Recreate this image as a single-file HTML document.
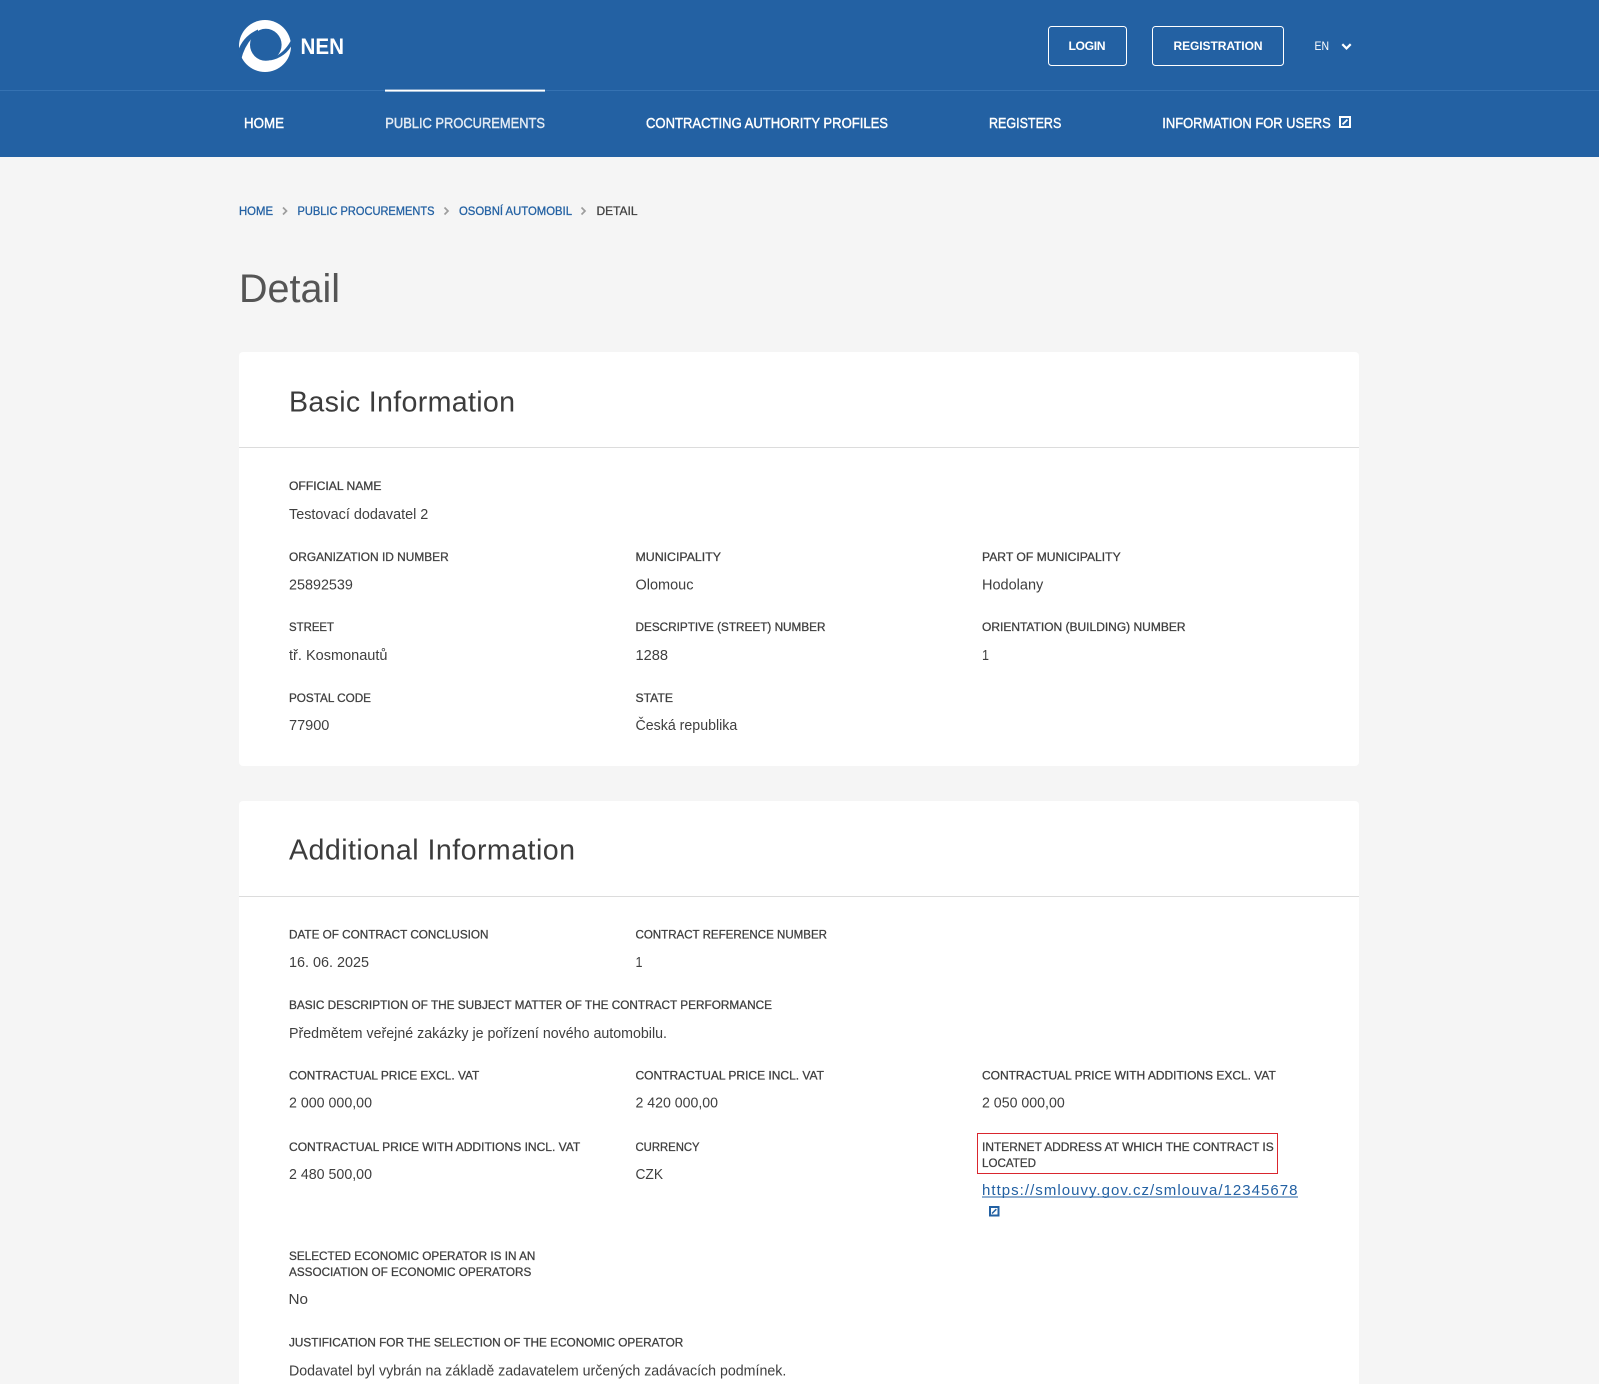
<!DOCTYPE html>
<html lang="en"><head><meta charset="utf-8"><title>Detail</title>
<style>
html,body{margin:0;padding:0;background:#f5f5f5;width:1599px;height:1384px;overflow:hidden}
svg{display:block;position:absolute;left:0;top:0}
text{font-family:"Liberation Sans",sans-serif}
.l{font-size:12.2px;fill:#3f3f3f;stroke:#3f3f3f;stroke-width:.28px}
.v{font-size:14.4px;fill:#3f3f3f}
.n{font-size:14.4px;fill:#fff;stroke:#fff;stroke-width:.4px}
.b{font-size:12.2px;fill:#2361a3;stroke:#2361a3;stroke-width:.3px}
.h{font-size:28.6px;fill:#3c3c3c}
</style></head><body>
<svg width="1599" height="1384" viewBox="0 0 1599 1384" xmlns="http://www.w3.org/2000/svg">
<rect width="1599" height="157" fill="#2361a3"/>
<rect y="90" width="1599" height="1" fill="#3572b2"/>
<rect x="385" y="89.6" width="160" height="2" fill="#fff"/>
<!-- logo -->
<circle cx="265" cy="46" r="26" fill="#fff"/>
<ellipse cx="265.8" cy="44.8" rx="15.8" ry="16" fill="#2361a3"/>
<path d="M258 29.5Q243 36 238 51L241 60Q244 47 252.5 37.5L258 35Z" fill="#2361a3"/>
<path d="M292 38Q287 50 275.5 56.5L270 60.5Q286 57.5 293 43Z" fill="#2361a3"/>
<text x="300.5" y="54" font-size="22" font-weight="700" fill="#fff" textLength="43.5" lengthAdjust="spacingAndGlyphs">NEN</text>
<!-- top buttons -->
<rect x="1048.5" y="26.5" width="78" height="39" rx="3" fill="none" stroke="#fff"/>
<text x="1068.5" y="50" font-size="12.2" font-weight="700" fill="#fff" textLength="37" lengthAdjust="spacing">LOGIN</text>
<rect x="1152.5" y="26.5" width="131" height="39" rx="3" fill="none" stroke="#fff"/>
<text x="1173.5" y="50" font-size="12" font-weight="700" fill="#fff" textLength="89" lengthAdjust="spacing">REGISTRATION</text>
<text x="1314.5" y="50" font-size="12.4" fill="#fff" textLength="14.5" lengthAdjust="spacingAndGlyphs">EN</text>
<path d="M1342.3 44.2L1346.5 48.4L1350.7 44.2" fill="none" stroke="#fff" stroke-width="2.2"/>
<!-- nav -->
<text class="n" x="244" y="127.8" textLength="40" lengthAdjust="spacingAndGlyphs">HOME</text>
<text class="n" x="385.3" y="127.8" textLength="159.7" lengthAdjust="spacingAndGlyphs" style="fill:#e3ebf4;stroke:#e3ebf4">PUBLIC PROCUREMENTS</text>
<text class="n" x="646" y="127.8" textLength="242" lengthAdjust="spacingAndGlyphs">CONTRACTING AUTHORITY PROFILES</text>
<text class="n" x="989" y="127.8" textLength="72.3" lengthAdjust="spacingAndGlyphs">REGISTERS</text>
<text class="n" x="1162.3" y="127.8" textLength="168.4" lengthAdjust="spacingAndGlyphs">INFORMATION FOR USERS</text>
<rect x="1339" y="116" width="12" height="12" fill="#fff"/>
<rect x="1341" y="118" width="8" height="8" fill="#2361a3"/>
<path d="M1342.6 124.4L1347.4 119.6" fill="none" stroke="#fff" stroke-width="1.8"/>
<!-- breadcrumb -->
<text class="b" x="239" y="215" textLength="34" lengthAdjust="spacingAndGlyphs">HOME</text>
<text class="b" x="297.5" y="215" textLength="137" lengthAdjust="spacingAndGlyphs">PUBLIC PROCUREMENTS</text>
<text class="b" x="459" y="215" textLength="113" lengthAdjust="spacingAndGlyphs">OSOBNÍ AUTOMOBIL</text>
<text class="l" x="596.5" y="215" textLength="41" lengthAdjust="spacingAndGlyphs">DETAIL</text>
<g fill="none" stroke="#9d9d9d" stroke-width="1.7">
<path d="M283 207.5L286.5 211L283 214.5"/>
<path d="M444.5 207.5L448 211L444.5 214.5"/>
<path d="M581.5 207.5L585 211L581.5 214.5"/>
</g>
<text x="239" y="302" font-size="40" fill="#555" textLength="101" lengthAdjust="spacingAndGlyphs">Detail</text>
<!-- card 1 -->
<rect x="239" y="352" width="1120" height="414" rx="4" fill="#fff"/>
<rect x="239" y="447" width="1120" height="1" fill="#dcdcdc"/>
<text class="h" x="289" y="411.5" textLength="226" lengthAdjust="spacing">Basic Information</text>
<text class="l" x="289" y="490" textLength="92.5" lengthAdjust="spacingAndGlyphs">OFFICIAL NAME</text>
<text class="v" x="289" y="519" textLength="139.3" lengthAdjust="spacingAndGlyphs">Testovací dodavatel 2</text>
<text class="l" x="289" y="561" textLength="159.7" lengthAdjust="spacingAndGlyphs">ORGANIZATION ID NUMBER</text>
<text class="v" x="289" y="589.5" textLength="63.9" lengthAdjust="spacingAndGlyphs">25892539</text>
<text class="l" x="635.5" y="561" textLength="85.5" lengthAdjust="spacingAndGlyphs">MUNICIPALITY</text>
<text class="v" x="635.5" y="589.5" textLength="58" lengthAdjust="spacingAndGlyphs">Olomouc</text>
<text class="l" x="982" y="561" textLength="138.7" lengthAdjust="spacingAndGlyphs">PART OF MUNICIPALITY</text>
<text class="v" x="982" y="589.5" textLength="61.3" lengthAdjust="spacingAndGlyphs">Hodolany</text>
<text class="l" x="289" y="631" textLength="45" lengthAdjust="spacingAndGlyphs">STREET</text>
<text class="v" x="289" y="660" textLength="98.5" lengthAdjust="spacingAndGlyphs">tř. Kosmonautů</text>
<text class="l" x="635.5" y="631" textLength="190" lengthAdjust="spacingAndGlyphs">DESCRIPTIVE (STREET) NUMBER</text>
<text class="v" x="635.5" y="660" textLength="32.5" lengthAdjust="spacingAndGlyphs">1288</text>
<text class="l" x="982" y="631" textLength="203.5" lengthAdjust="spacingAndGlyphs">ORIENTATION (BUILDING) NUMBER</text>
<text class="v" x="982" y="660" textLength="7" lengthAdjust="spacingAndGlyphs">1</text>
<text class="l" x="289" y="702" textLength="82" lengthAdjust="spacingAndGlyphs">POSTAL CODE</text>
<text class="v" x="289" y="730" textLength="40.4" lengthAdjust="spacingAndGlyphs">77900</text>
<text class="l" x="635.5" y="702" textLength="37.5" lengthAdjust="spacingAndGlyphs">STATE</text>
<text class="v" x="635.5" y="730" textLength="101.8" lengthAdjust="spacingAndGlyphs">Česká republika</text>
<!-- card 2 -->
<path d="M239 1384V805a4 4 0 0 1 4-4H1355a4 4 0 0 1 4 4V1384Z" fill="#fff"/>
<rect x="239" y="896" width="1120" height="1" fill="#dcdcdc"/>
<text class="h" x="289" y="859.5" textLength="286" lengthAdjust="spacing">Additional Information</text>
<text class="l" x="289" y="938.5" textLength="199.5" lengthAdjust="spacingAndGlyphs">DATE OF CONTRACT CONCLUSION</text>
<text class="v" x="289" y="967" textLength="80" lengthAdjust="spacingAndGlyphs">16. 06. 2025</text>
<text class="l" x="635.5" y="938.5" textLength="191.5" lengthAdjust="spacingAndGlyphs">CONTRACT REFERENCE NUMBER</text>
<text class="v" x="635.5" y="967" textLength="7" lengthAdjust="spacingAndGlyphs">1</text>
<text class="l" x="289" y="1009" textLength="483" lengthAdjust="spacingAndGlyphs">BASIC DESCRIPTION OF THE SUBJECT MATTER OF THE CONTRACT PERFORMANCE</text>
<text class="v" x="289" y="1038" textLength="378" lengthAdjust="spacingAndGlyphs">Předmětem veřejné zakázky je pořízení nového automobilu.</text>
<text class="l" x="289" y="1079.5" textLength="190.3" lengthAdjust="spacingAndGlyphs">CONTRACTUAL PRICE EXCL. VAT</text>
<text class="v" x="289" y="1107.5" textLength="83" lengthAdjust="spacingAndGlyphs">2 000 000,00</text>
<text class="l" x="635.5" y="1079.5" textLength="188.5" lengthAdjust="spacingAndGlyphs">CONTRACTUAL PRICE INCL. VAT</text>
<text class="v" x="635.5" y="1107.5" textLength="82.5" lengthAdjust="spacingAndGlyphs">2 420 000,00</text>
<text class="l" x="982" y="1079.5" textLength="293.8" lengthAdjust="spacingAndGlyphs">CONTRACTUAL PRICE WITH ADDITIONS EXCL. VAT</text>
<text class="v" x="982" y="1107.5" textLength="82.7" lengthAdjust="spacingAndGlyphs">2 050 000,00</text>
<text class="l" x="289" y="1151" textLength="291.3" lengthAdjust="spacingAndGlyphs">CONTRACTUAL PRICE WITH ADDITIONS INCL. VAT</text>
<text class="v" x="289" y="1179" textLength="83" lengthAdjust="spacingAndGlyphs">2 480 500,00</text>
<text class="l" x="635.5" y="1151" textLength="64.1" lengthAdjust="spacingAndGlyphs">CURRENCY</text>
<text class="v" x="635.5" y="1179" textLength="27.5" lengthAdjust="spacingAndGlyphs">CZK</text>
<rect x="977.5" y="1133.5" width="300" height="40" fill="none" stroke="#d9262e"/>
<text class="l" x="982" y="1151" textLength="291.7" lengthAdjust="spacingAndGlyphs">INTERNET ADDRESS AT WHICH THE CONTRACT IS</text>
<text class="l" x="982" y="1166.8" textLength="54" lengthAdjust="spacingAndGlyphs">LOCATED</text>
<text x="982" y="1195" font-size="15" fill="#2361a3" textLength="315.5" lengthAdjust="spacing">https://smlouvy.gov.cz/smlouva/12345678</text>
<rect x="982" y="1196.5" width="316" height="1" fill="#2361a3"/>
<rect x="989" y="1206" width="10.5" height="10.5" fill="#2361a3"/>
<rect x="991" y="1208" width="6.5" height="6.5" fill="#fff"/>
<path d="M992 1213.5L996.3 1209.2" fill="none" stroke="#2361a3" stroke-width="1.5"/>
<text class="l" x="289" y="1260" textLength="246.4" lengthAdjust="spacingAndGlyphs">SELECTED ECONOMIC OPERATOR IS IN AN</text>
<text class="l" x="289" y="1276" textLength="242.3" lengthAdjust="spacingAndGlyphs">ASSOCIATION OF ECONOMIC OPERATORS</text>
<text class="v" x="288.5" y="1304" textLength="19.5" lengthAdjust="spacingAndGlyphs">No</text>
<text class="l" x="289" y="1346.5" textLength="394.3" lengthAdjust="spacingAndGlyphs">JUSTIFICATION FOR THE SELECTION OF THE ECONOMIC OPERATOR</text>
<text class="v" x="289" y="1375.5" textLength="497.3" lengthAdjust="spacingAndGlyphs">Dodavatel byl vybrán na základě zadavatelem určených zadávacích podmínek.</text>
</svg>
</body></html>
